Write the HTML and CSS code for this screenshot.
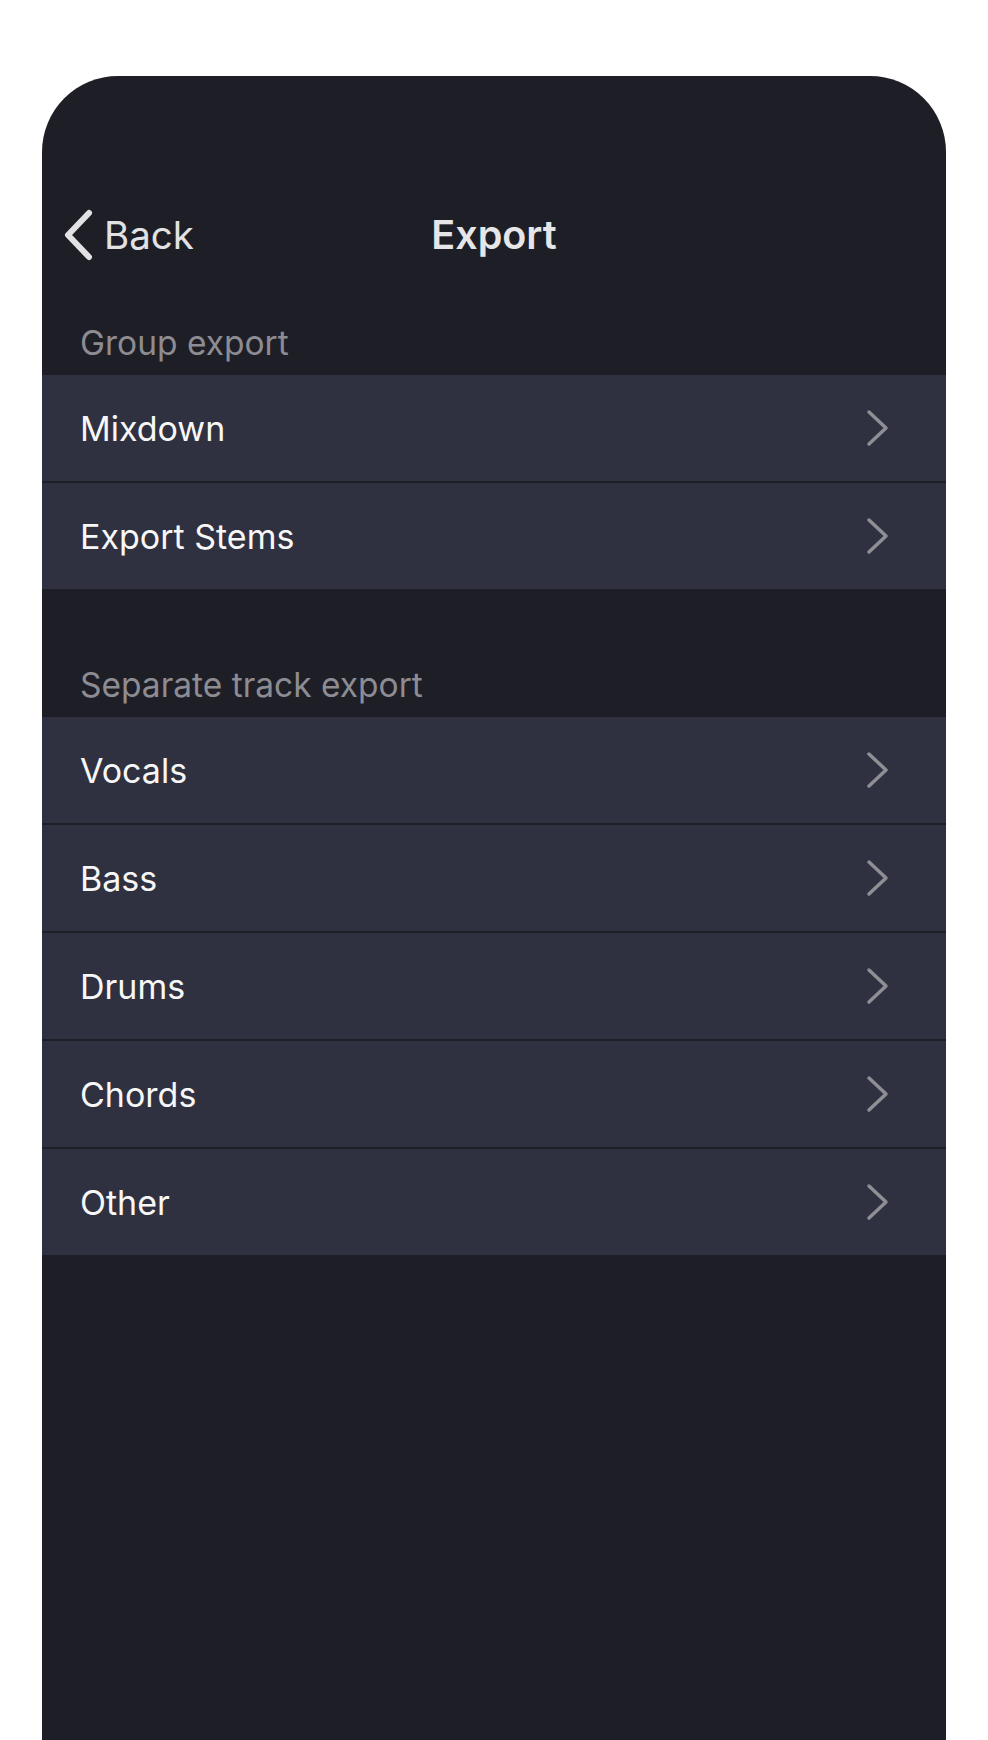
FILE: index.html
```html
<!DOCTYPE html>
<html lang="en">
<head>
    <meta charset="UTF-8">
    <meta name="viewport" content="width=device-width, initial-scale=1.0">
    <title>Export</title>
    <link rel="stylesheet" href="styles.css">
</head>
<body>
    <div class="phone">
        <div class="nav">
            <a class="back" href="#">
                <svg class="back-icon" width="32" height="52" viewBox="0 0 32 52">
                    <path d="M27 4 L6 26 L27 48" fill="none" stroke="currentColor" stroke-width="6" stroke-linecap="round" stroke-linejoin="round"/>
                </svg>
                <span>Back</span>
            </a>
            <div class="title">Export</div>
        </div>

        <div class="section-header">Group export</div>
        <div class="list">
            <div class="row"><span>Mixdown</span><svg class="chevron" width="24" height="40" viewBox="0 0 24 40"><path d="M3 4 L20 20 L3 36" fill="none" stroke="currentColor" stroke-width="3.5" stroke-linecap="round" stroke-linejoin="round"/></svg></div>
            <div class="row"><span>Export Stems</span><svg class="chevron" width="24" height="40" viewBox="0 0 24 40"><path d="M3 4 L20 20 L3 36" fill="none" stroke="currentColor" stroke-width="3.5" stroke-linecap="round" stroke-linejoin="round"/></svg></div>
        </div>

        <div class="section-header second">Separate track export</div>
        <div class="list">
            <div class="row"><span>Vocals</span><svg class="chevron" width="24" height="40" viewBox="0 0 24 40"><path d="M3 4 L20 20 L3 36" fill="none" stroke="currentColor" stroke-width="3.5" stroke-linecap="round" stroke-linejoin="round"/></svg></div>
            <div class="row"><span>Bass</span><svg class="chevron" width="24" height="40" viewBox="0 0 24 40"><path d="M3 4 L20 20 L3 36" fill="none" stroke="currentColor" stroke-width="3.5" stroke-linecap="round" stroke-linejoin="round"/></svg></div>
            <div class="row"><span>Drums</span><svg class="chevron" width="24" height="40" viewBox="0 0 24 40"><path d="M3 4 L20 20 L3 36" fill="none" stroke="currentColor" stroke-width="3.5" stroke-linecap="round" stroke-linejoin="round"/></svg></div>
            <div class="row"><span>Chords</span><svg class="chevron" width="24" height="40" viewBox="0 0 24 40"><path d="M3 4 L20 20 L3 36" fill="none" stroke="currentColor" stroke-width="3.5" stroke-linecap="round" stroke-linejoin="round"/></svg></div>
            <div class="row"><span>Other</span><svg class="chevron" width="24" height="40" viewBox="0 0 24 40"><path d="M3 4 L20 20 L3 36" fill="none" stroke="currentColor" stroke-width="3.5" stroke-linecap="round" stroke-linejoin="round"/></svg></div>
        </div>
    </div>
</body>
</html>
```

FILE: styles.css
```css
body {
    margin: 0;
    background-color: #fff;
    font-family: Inter, "Noto Sans", sans-serif;
}
.phone {
    margin: 76px 0 0 42px;
    width: 904px;
    height: 1664px;
    background-color: #1e1e26;
    border-radius: 76px 76px 0 0;
    overflow: hidden;
    padding-top: 115px;
    box-sizing: border-box;
}
.nav {
    position: relative;
    height: 88px;
    display: flex;
    align-items: center;
    justify-content: center;
}
.back {
    position: absolute;
    left: 20px;
    top: 0;
    height: 88px;
    display: flex;
    align-items: center;
    gap: 10px;
    color: #e2e2e4;
    text-decoration: none;
    font-size: 38.5px;
}
.back-icon {
    display: block;
}
.title {
    color: #e6e6e8;
    font-size: 39.5px;
    font-weight: 600;
}
.section-header {
    height: 96px;
    box-sizing: border-box;
    display: flex;
    align-items: flex-end;
    padding: 0 0 12px 38px;
    color: #8c8c92;
    font-size: 33.5px;
}
.section-header.second {
    height: 128px;
}
.list {
    display: flex;
    flex-direction: column;
    gap: 2px;
}
.row {
    height: 106px;
    background-color: #303140;
    display: flex;
    align-items: center;
    justify-content: space-between;
    padding: 0 56px 0 38px;
    color: #f7f7f8;
    font-size: 34px;
}
.chevron {
    display: block;
    color: #8e8e95;
}
```
